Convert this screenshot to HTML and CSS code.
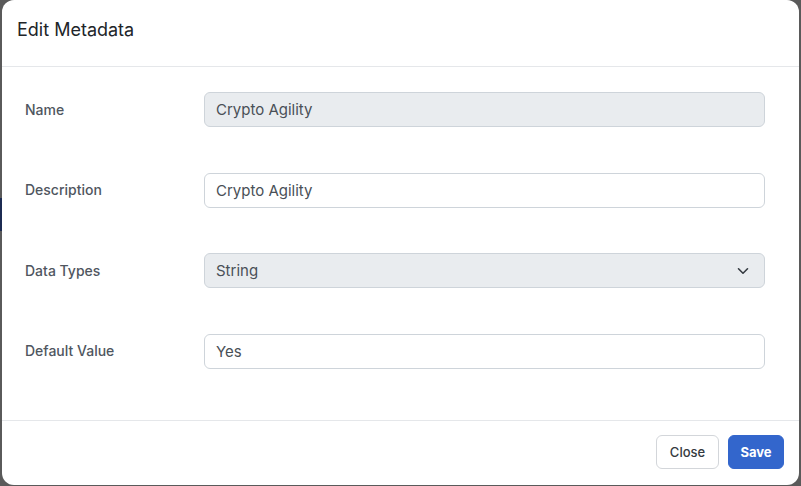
FILE: index.html
```html
<!DOCTYPE html>
<html>
<head>
<meta charset="utf-8">
<link rel="stylesheet" href="styles.css">
</head>
<body>
<div class="backdrop">
  <div class="edge"><div class="edge-nav"></div></div>
  <div class="modal">
    <div class="modal-header">
      <h1 class="modal-title">Edit Metadata</h1>
    </div>
    <div class="modal-body">
      <div class="row">
        <label class="label">Name</label>
        <div class="field disabled">Crypto Agility</div>
      </div>
      <div class="row">
        <label class="label">Description</label>
        <div class="field">Crypto Agility</div>
      </div>
      <div class="row">
        <label class="label">Data Types</label>
        <div class="field disabled select">
          <span>String</span>
          <svg class="chev" width="12" height="8" viewBox="0 0 12 8"><path d="M1.5 1.8 L6 6.2 L10.5 1.8" fill="none" stroke="#343a40" stroke-width="1.6" stroke-linecap="round" stroke-linejoin="round"/></svg>
        </div>
      </div>
      <div class="row">
        <label class="label">Default Value</label>
        <div class="field">Yes</div>
      </div>
    </div>
    <div class="modal-footer">
      <button class="btn btn-close">Close</button>
      <button class="btn btn-save">Save</button>
    </div>
  </div>
</div>
</body>
</html>
```
FILE: styles.css
```css
html, body {
  margin: 0;
  padding: 0;
  width: 801px;
  height: 486px;
  overflow: hidden;
  background: #5a5a5a;
  font-family: Inter, "Noto Sans", sans-serif;
}
.backdrop {
  display: flex;
  width: 801px;
  height: 486px;
}
.edge {
  width: 2px;
  flex: none;
  padding-top: 198px;
}
.edge-nav {
  height: 33px;
  background: #1c2b52;
}
.modal {
  width: 797px;
  height: 485px;
  background: #fff;
  border-radius: 12px;
  display: flex;
  flex-direction: column;
  box-sizing: border-box;
}
.modal-header {
  height: 67px;
  box-sizing: border-box;
  border-bottom: 1px solid #e5e7ea;
  padding: 0 15px;
  display: flex;
  align-items: center;
}
.modal-title {
  margin: 0 0 7px 0;
  font-size: 18px;
  font-weight: 400;
  color: #212529;
}
.modal-body {
  padding: 25px 34px 0 23px;
  flex: 1;
  display: flex;
  flex-direction: column;
  gap: 45.67px;
  border-bottom: 1px solid #e5e7ea;
}
.row {
  display: flex;
  align-items: center;
  height: 35px;
}
.label {
  width: 179px;
  font-size: 14px;
  font-weight: 500;
  color: #4f5660;
  margin-top: -1px;
}
.field {
  flex: 1;
  height: 35px;
  box-sizing: border-box;
  border: 1px solid #ced4da;
  border-radius: 6px;
  padding: 0 11px;
  display: flex;
  align-items: center;
  font-size: 15px;
  color: #495057;
  background: #fff;
}
.field.disabled {
  background: #e9ecef;
}
.select {
  justify-content: space-between;
  padding-right: 15px;
}
.modal-footer {
  height: 64px;
  display: flex;
  justify-content: flex-end;
  align-items: center;
  gap: 9px;
  padding: 0 15px 3px 0;
  box-sizing: border-box;
}
.btn {
  height: 34px;
  border-radius: 6px;
  font-family: Inter, "Noto Sans", sans-serif;
  font-size: 13px;
  padding: 0;
}
.btn-close {
  width: 63px;
  background: #fff;
  border: 1px solid #d3d6da;
  color: #343a40;
  font-weight: 500;
}
.btn-save {
  width: 56px;
  background: #3366cc;
  border: 1px solid #3366cc;
  color: #fff;
  font-weight: 700;
}
```
